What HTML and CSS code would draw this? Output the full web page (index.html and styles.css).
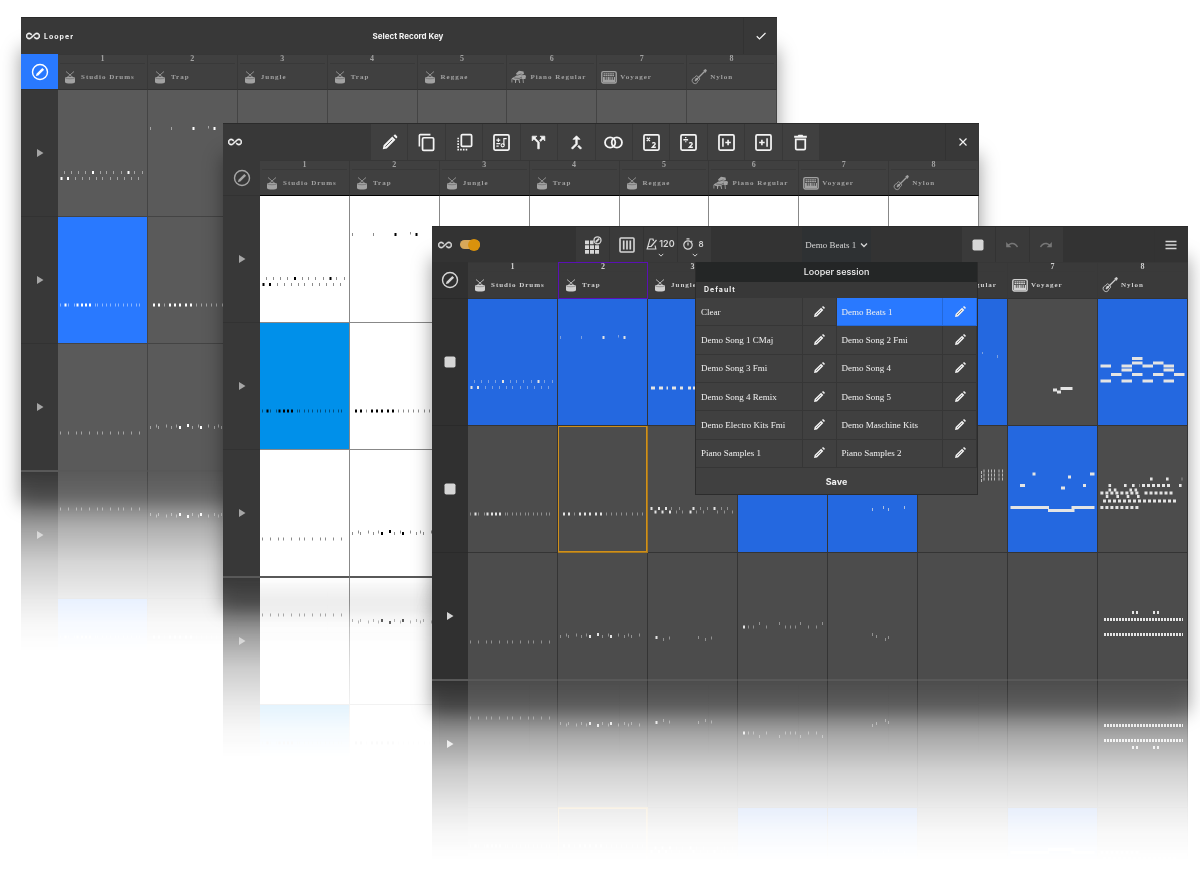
FILE: index.html
```html
<!DOCTYPE html>
<html lang="en">
<head>
<meta charset="utf-8">
<meta name="viewport" content="width=device-width, initial-scale=1">
<title>Looper</title>
<link rel="stylesheet" href="styles.css">
</head>
<body>
<svg class="defs" aria-hidden="true">
  <symbol id="loop" viewBox="0 0 24 24"><path fill="currentColor" stroke="currentColor" stroke-width=".8" d="M18.6 6.62c-1.44 0-2.8.56-3.77 1.53L12 10.66 10.48 12h.01L7.8 14.39c-.64.64-1.49.99-2.4.99-1.87 0-3.39-1.51-3.39-3.38S3.53 8.62 5.4 8.62c.91 0 1.76.35 2.44 1.03l1.13 1 1.51-1.34L9.22 8.2C8.2 7.18 6.84 6.62 5.4 6.62 2.42 6.62 0 9.04 0 12s2.42 5.38 5.4 5.38c1.44 0 2.8-.56 3.77-1.53l2.83-2.5.01.01L13.52 12h-.01l2.69-2.39c.64-.64 1.49-.99 2.4-.99 1.87 0 3.39 1.51 3.39 3.38s-1.52 3.38-3.39 3.38c-.9 0-1.76-.35-2.44-1.03l-1.14-1.01-1.51 1.34 1.27 1.12c1.02 1.01 2.37 1.57 3.82 1.57 2.98 0 5.4-2.41 5.4-5.38s-2.42-5.37-5.4-5.37z"/></symbol>
  <symbol id="key" viewBox="0 0 18 18"><circle cx="9" cy="9" r="7.5" fill="none" stroke="currentColor" stroke-width="1.4"/><path fill="currentColor" d="M4.9 13.1l.6-2.4 5.8-5.8 1.8 1.8-5.8 5.8z"/></symbol>
  <symbol id="play" viewBox="0 0 8 8"><path fill="currentColor" d="M1 0l6.5 4L1 8z"/></symbol>
  <symbol id="stop" viewBox="0 0 12 12"><rect x=".5" y=".5" width="11" height="11" rx="1.8" fill="currentColor"/></symbol>
  <symbol id="drum" viewBox="0 0 16 16"><path d="M4 2.500l7 6M12 2.500l-7 6" stroke="currentColor" stroke-width=".8" fill="none"/><path fill="currentColor" d="M3 8.400c1.500-.9 8.500-.9 10 0v4.600c0 2-10 2-10 0z"/><path d="M3.300 9c2 1 7.400 1 9.400 0" fill="none" stroke="#404040" stroke-width=".4"/></symbol>
  <symbol id="piano" viewBox="0 0 16 16"><path fill="currentColor" d="M5 4.500l3-2.800 4.500.8.5 2.500-3.500 1.200 4.500-.2 1 1-.6 3h-3l-1-.6-2 1.100.8 3.500h-.9l-1-3.200-2 .2-.4 3h-.8l-.2-3-1.700-.2L.5 9.500 6 6.200z"/><path d="M6 6.400l4.500-1.500M3.200 9l5 .4 2.800-1.400" stroke="#404040" stroke-width=".6" fill="none"/><path d="M12 9.500l.4 4.500M.9 10v3.500" stroke="currentColor" stroke-width=".8"/></symbol>
  <symbol id="synth" viewBox="0 0 16 16"><rect x=".8" y="2.600" width="14.400" height="11.400" rx="1.500" fill="none" stroke="currentColor" stroke-width="1.400"/><path d="M2.500 4.800h11M2.500 6.600h11" stroke="currentColor" stroke-width="1.200" stroke-dasharray="1.800 .4"/><path fill="currentColor" d="M2 8h12v5.200H2z"/><path d="M4.300 8v2.800M6.200 8v2.800M9 8v2.800M10.800 8v2.800M12.500 8v2.800" stroke="#3a3a3a" stroke-width=".8"/></symbol>
  <symbol id="guitar" viewBox="0 0 16 16"><path d="M6.500 7.200c-1-.8-2-.3-2.200.8-.3 1.100-3 .8-3.200 3.200-.1 2 1.600 3.700 3.500 3.400 2-.2 1.600-2.300 2.800-3 1.100-.5 1.600-1.700.9-2.600z" fill="none" stroke="currentColor" stroke-width=".9"/><path d="M4 12l9.800-9.800M12.700 1.800l1.800-.9.600.6-.9 1.900" stroke="currentColor" stroke-width="1.300" fill="none"/><circle cx="5.600" cy="10.300" r="1.200" fill="currentColor"/></symbol>
  <symbol id="edit" viewBox="0 0 24 24"><path d="M3.500 20.500l1-5L15.500 4.500l4 4L8.500 19.500zM17 3.500l1-1c.6-.6 1.400-.6 2 0L21.500 4c.6.600.600 1.400 0 2l-1 1z" fill="currentColor"/><path d="M6.800 17.200L15.500 8.500" stroke="#404040" stroke-width="1"/></symbol>
  <symbol id="copy" viewBox="0 0 24 24"><path d="M3 17V3.200C3 2.500 3.500 2 4.200 2H17" fill="none" stroke="currentColor" stroke-width="2"/><rect x="7" y="6" width="14" height="16" rx="1.500" fill="none" stroke="currentColor" stroke-width="2.200"/></symbol>
  <symbol id="paste" viewBox="0 0 24 24"><rect x="8" y="2" width="13" height="15" rx="1.500" fill="none" stroke="currentColor" stroke-width="2.200"/><path d="M4 6v15h13" fill="none" stroke="currentColor" stroke-width="2" stroke-dasharray="2 1.500"/></symbol>
  <symbol id="box" viewBox="0 0 24 24"><rect x="2.500" y="2.500" width="19" height="19" rx="1.500" fill="none" stroke="currentColor" stroke-width="2.200"/></symbol>
  <symbol id="quant" viewBox="0 0 24 24"><use href="#box"/><path d="M5.500 9h5M8 6.500v5M5.500 13.500h5M5.500 16.500h3M15 15V7h3.500" fill="none" stroke="currentColor" stroke-width="1.500"/><circle cx="13.500" cy="15.500" r="2" fill="none" stroke="currentColor" stroke-width="1.400"/></symbol>
  <symbol id="split" viewBox="0 0 24 24"><path fill="currentColor" d="M14 4l2.290 2.290-2.880 2.880 1.420 1.420 2.880-2.880L20 10V4zm-4 0H4v6l2.290-2.290 4.710 4.700V20h2v-8.410l-5.290-5.300z" stroke="currentColor" stroke-width=".9"/></symbol>
  <symbol id="merge" viewBox="0 0 24 24"><path fill="currentColor" d="M17 20.410L18.410 19 15 15.590 13.590 17zM7.500 8H11v5.590L5.590 19 7 20.410l6-6V8h3.500L12 3.500z" stroke="currentColor" stroke-width=".9"/></symbol>
  <symbol id="rings" viewBox="0 0 24 24"><g fill="none" stroke="currentColor" stroke-width="2.300"><circle cx="7.800" cy="12" r="6.500"/><circle cx="16.200" cy="12" r="6.500"/></g></symbol>
  <symbol id="double" viewBox="0 0 24 24"><use href="#box"/><path d="M6 6l4 4M10 6l-4 4M13 13c1-1.500 4-1 3.600 1L13 18h4.500" fill="none" stroke="currentColor" stroke-width="1.700"/></symbol>
  <symbol id="halve" viewBox="0 0 24 24"><use href="#box"/><path d="M5.500 8.500h6M8.500 5.200v1.500M8.500 10.300v1.500M13 13c1-1.500 4-1 3.600 1L13 18h4.500" fill="none" stroke="currentColor" stroke-width="1.700"/></symbol>
  <symbol id="before" viewBox="0 0 24 24"><use href="#box"/><path d="M7.500 6.500v11M10.500 12h7M14 8.500v7" fill="none" stroke="currentColor" stroke-width="2"/></symbol>
  <symbol id="after" viewBox="0 0 24 24"><use href="#box"/><path d="M16.500 6.500v11M6.500 12h7M10 8.500v7" fill="none" stroke="currentColor" stroke-width="2"/></symbol>
  <symbol id="trash" viewBox="0 0 24 24"><path d="M6 8v11.500c0 .9.600 1.500 1.500 1.500h9c.9 0 1.500-.6 1.500-1.500V8z" fill="none" stroke="currentColor" stroke-width="2.200"/><path fill="currentColor" d="M4 3.500h4.500l1-1.200h5l1 1.200H20V6H4z"/></symbol>
  <symbol id="close" viewBox="0 0 24 24"><path d="M5 5l14 14M19 5L5 19" stroke="currentColor" stroke-width="2.400"/></symbol>
  <symbol id="check" viewBox="0 0 24 24"><path d="M3.500 12.500l5.500 5.500L21 6" fill="none" stroke="currentColor" stroke-width="2.300"/></symbol>
  <symbol id="grid" viewBox="0 0 18 18"><path fill="currentColor" d="M1 4.500h4v3.700H1zM6 4.500h3.500v3.700H6zM1 9.300h4v3.700H1zM6 9.300h4v3.700H6zM11 9.300h4v3.700h-4zM1 14h4v3.700H1zM6 14h4v3.700H6zM11 14h4v3.700h-4z"/><circle cx="13.500" cy="4.300" r="3.500" fill="none" stroke="currentColor" stroke-width="1.300"/><path d="M11.800 6l3.300-3.300" stroke="currentColor" stroke-width="1.800"/></symbol>
  <symbol id="mixer" viewBox="0 0 16 16"><rect x="1" y="1" width="14" height="14" rx="1" fill="none" stroke="currentColor" stroke-width="1.600"/><path d="M4.700 3.500v9M8 3.500v9M11.300 3.500v9" stroke="currentColor" stroke-width="1.700"/></symbol>
  <symbol id="metro" viewBox="0 0 12 12"><path d="M7.500 3L7 1H4L1.200 11h8.600l-.7-3.500M2.200 8.500h3.300M5 8.500l5.500-6.500" fill="none" stroke="currentColor" stroke-width="1.200"/></symbol>
  <symbol id="timer" viewBox="0 0 12 12"><circle cx="6" cy="7" r="4.200" fill="none" stroke="currentColor" stroke-width="1.200"/><path d="M4.500.8h3M6 4.500v3M9.300 2.800l.9.900" stroke="currentColor" stroke-width="1.200"/></symbol>
  <symbol id="chev" viewBox="0 0 8 8"><path d="M1 2.500l3 3 3-3" fill="none" stroke="currentColor" stroke-width="1.300"/></symbol>
  <symbol id="undo" viewBox="0 0 24 24"><path fill="currentColor" d="M12.500 8c-2.650 0-5.050.99-6.900 2.600L2 7v9h9l-3.620-3.620c1.390-1.160 3.160-1.880 5.120-1.880 3.540 0 6.550 2.310 7.600 5.500l2.370-.78C21.080 11.030 17.150 8 12.500 8z"/></symbol>
  <symbol id="menu" viewBox="0 0 12 12"><path d="M.5 2.500h11M.5 6h11M.5 9.500h11" stroke="currentColor" stroke-width="1.400"/></symbol>

  <symbol id="a1" viewBox="0 0 90 127"><path class="dim" d="M6.500 81v3M13.500 81v3M20.500 81v3M27.500 81v3M42.500 81v3M48.500 81v3M55.500 81v3M63.500 81v3M76.500 81v3M84.500 81v3M17.500 87v3M24.500 87v3M31.500 87v3M38.500 87v3M44.500 87v3M52.500 87v3M59.500 87v3M66.500 87v3M73.500 87v3M80.500 87v3"/><path class="lit" d="M35 81v3M70.500 81v3M3.500 87v3M10 87v3"/></symbol>
  <symbol id="a2" viewBox="0 0 90 127"><path class="dim" d="M2.500 37v3M23.500 37v3M60.500 36v2.500"/><path class="lit" d="M45.500 37v3M66.500 37v3"/></symbol>
  <symbol id="b1" viewBox="0 0 90 127"><path class="dim" d="M2.500 86.500v3M10.500 86.500v3M16.500 86.500v3M37.500 86.500v3M39.500 86.500v3M44.500 86.500v3M48.500 86.500v3M52.500 86.500v3M57.500 86.500v3M60.500 86.500v3M65.500 86.500v3M69.500 86.500v3M73.500 86.500v3M78.500 86.500v3M81.500 86.500v3"/><path class="lit" d="M7.500 86.500v3M19.500 86.500v3M24 86.500v3M28 86.500v3M32 86.500v3"/></symbol>
  <symbol id="b2" viewBox="0 0 90 127"><path class="dim" d="M16.500 86.500v3M48.500 86.500v3M53.500 86.500v3M58.500 86.500v3M63.500 86.500v3M68.500 86.500v3M74.500 86.500v3M79.500 86.500v3M84.500 86.500v3"/><path class="lit" d="M6 86.500v3M11 86.500v3M22 86.500v3M27 86.500v3M32 86.500v3M38 86.500v3M43 86.500v3"/></symbol>
  <symbol id="c1" viewBox="0 0 90 127"><path class="dim" d="M2.500 87.500v3M10.500 87.500v3M18.500 87.500v3M23.500 87.500v3M31.500 87.500v3M39.500 87.500v3M44.500 87.500v3M52.500 87.500v3M60.500 87.500v3M65.500 87.500v3M73.500 87.500v3M81.500 87.500v3"/></symbol>
  <symbol id="c2" viewBox="0 0 90 127"><path class="dim" d="M2.500 82v3M10.500 82v3M23.500 82v3M44.500 82v3M66.500 82v3M73.500 82v3M8.500 80.500v3M18.500 80.500v3M28.500 80.500v3M50.500 80.500v3M60.500 80.500v3M70.500 80.500v3M81.500 80.500v3"/><path class="lit" d="M32 82v3M53 82v3M40 80v3"/></symbol>
  <symbol id="a3" viewBox="0 0 90 127"><path class="bar" d="M3 89h4M11 89h4M18.500 89h1.500M24 89h4M32 89h3M40 89h3M45 89h2"/></symbol>
  <symbol id="a6" viewBox="0 0 90 127"><path class="dim" d="M64.500 53v2M79.500 56v3"/></symbol>
  <symbol id="a7" viewBox="0 0 90 127"><path class="bar" d="M45 91h4M49 93h4M52.500 89.500h12"/></symbol>
  <symbol id="a8" viewBox="0 0 90 127"><path class="bar" d="M34 59.500h10.500M34 64h10.500M55 64h10.500M2.500 67h10.500M23.500 67h10.500M44.500 67h10.500M65.500 67h10.500M23.500 71h10.500M65.500 71h10.500M13 75.500h10.500M34 75.500h10.500M55 75.500h10.500M76 75.500h10.500M2.500 82h10.500M23.500 82h10.500M44.500 82h10.500M65.500 82h10.500"/></symbol>
  <symbol id="b3" viewBox="0 0 90 127"><path class="dim" d="M23.500 81v3M31.500 81v3M52.500 81v3M59.500 81v3M73.500 81v3M79.500 81v3M28.500 84.500v3M34.500 84.500v3M48.500 84.500v3M55.500 84.500v3M69.500 84.500v3M76.500 84.500v3M84.500 84.500v3"/><path class="lit" d="M3.500 81v3M11 81v3M18 81v3M45.500 81v3M66.500 81v3M7.500 84.500v3M14.500 84.500v3M22 84.500v3M42.500 84.500v3"/></symbol>
  <symbol id="b5" viewBox="0 0 90 127"><path class="mid" d="M44.500 82v3M60.500 82v3M55.500 80v3M76.500 80v3"/></symbol>
  <symbol id="b6" viewBox="0 0 90 127"><path class="mid" d="M66 43.500v3M70.500 43.500v3M73.500 43.500v3M76.500 43.500v3M81 43.500v3M84.500 43.500v3M66 47.500v3M70.500 47.500v3M73.500 47.500v3M76.500 47.500v3M81 47.500v3M84.500 47.500v3M66 51.500v3M70.500 51.500v3M73.500 51.500v3M76.500 51.500v3M81 51.500v3M84.500 51.500v3M63.500 45v3M63.500 49v3M63.500 53v3"/></symbol>
  <symbol id="b7" viewBox="0 0 90 127"><path class="bar" d="M24.500 48h3M12 59.500h5M53 62h4M60 51h3M75 59.500h3M82 48h4.500M2.500 81.500h38.500M40 84.500h26.500M63.500 81.500h23"/></symbol>
  <symbol id="b8" viewBox="0 0 90 127"><path class="bar" d="M52 53h2.600M68 53h2.600M10.500 59.500h2.600M26 59.500h2.600M34 59.500h2.600M81 59.500h2.600M10.500 64h2.600M15.800 64h2.600M31.400 64h2.600M36.500 64h2.600M7.800 70.500h2.600M18.400 70.500h2.600M28.700 70.500h2.600M39 70.500h2.600"/><path class="bar dash" d="M44 59.500h29M2.400 67h40M46.500 67h28M5 75h75M2.400 81.500h40"/><path class="dim" d="M84 51.500v3M41.500 58v3"/></symbol>
  <symbol id="c3" viewBox="0 0 90 127"><path class="dim" d="M15.500 85v3M21.500 83.500v3M50.500 83v3M57.500 85v3M63.500 83.500v3"/><path class="lit" d="M8.500 83v3"/></symbol>
  <symbol id="c4" viewBox="0 0 90 127"><path class="dim" d="M10.500 72.500v3M15.500 72.500v3M28.500 72.500v3M47.500 72.500v3M52.500 72.500v3M57.500 72.500v3M70.500 72.500v3M78.500 72.500v3M21.500 69v3M41.500 69v3M62.500 69v3M84.500 69v3"/><path class="lit" d="M6 72.500v3"/></symbol>
  <symbol id="c5" viewBox="0 0 90 127"><path class="dim" d="M44.500 80v3M48.500 82v3M57.500 85v3M60.500 83v3"/></symbol>
  <symbol id="c8" viewBox="0 0 90 127"><path class="bar" d="M34 59.500h2M38 59.500h2M55 59.500h2M59 59.500h2"/><path class="bar fine" d="M6 66.500h79M6 81.500h79"/></symbol>
</svg>

<main class="stage">
  <section class="window window-record" aria-label="Select record key">
    <div class="surface">
      <header class="toolbar">
        <div class="brand"><svg class="i14"><use href="#loop"/></svg><span class="wide">Looper</span></div>
        <h1 class="title">Select Record Key</h1>
        <button class="tool end" aria-label="Confirm"><svg class="i12"><use href="#check"/></svg></button>
      </header>
      <div class="board">
        <button class="corner picked" aria-label="Record key"><svg class="i18"><use href="#key"/></svg></button>
        <div class="track"><b>1</b><p><svg><use href="#drum"/></svg>Studio Drums</p></div>
        <div class="track"><b>2</b><p><svg><use href="#drum"/></svg>Trap</p></div>
        <div class="track"><b>3</b><p><svg><use href="#drum"/></svg>Jungle</p></div>
        <div class="track"><b>4</b><p><svg><use href="#drum"/></svg>Trap</p></div>
        <div class="track"><b>5</b><p><svg><use href="#drum"/></svg>Reggae</p></div>
        <div class="track"><b>6</b><p><svg><use href="#piano"/></svg>Piano Regular</p></div>
        <div class="track"><b>7</b><p><svg><use href="#synth"/></svg>Voyager</p></div>
        <div class="track"><b>8</b><p><svg><use href="#guitar"/></svg>Nylon</p></div>
        <button class="scene" aria-label="Play scene 1"><svg class="i8"><use href="#play"/></svg></button>
        <button class="clip"><svg><use href="#a1"/></svg></button><button class="clip"><svg><use href="#a2"/></svg></button><button class="clip"></button><button class="clip"></button><button class="clip"></button><button class="clip"></button><button class="clip"></button><button class="clip"></button>
        <button class="scene" aria-label="Play scene 2"><svg class="i8"><use href="#play"/></svg></button>
        <button class="clip on"><svg><use href="#b1"/></svg></button><button class="clip"><svg><use href="#b2"/></svg></button><button class="clip"></button><button class="clip"></button><button class="clip"></button><button class="clip"></button><button class="clip"></button><button class="clip"></button>
        <button class="scene" aria-label="Play scene 3"><svg class="i8"><use href="#play"/></svg></button>
        <button class="clip"><svg><use href="#c1"/></svg></button><button class="clip"><svg><use href="#c2"/></svg></button><button class="clip"></button><button class="clip"></button><button class="clip"></button><button class="clip"></button><button class="clip"></button><button class="clip"></button>
      </div>
    </div>
  </section>

  <section class="window window-edit" aria-label="Edit clips">
    <div class="surface">
      <header class="toolbar">
        <div class="brand"><svg class="i14"><use href="#loop"/></svg></div>
        <div class="tools tools-edit">
          <button class="tool" aria-label="Edit"><svg><use href="#edit"/></svg></button>
          <button class="tool" aria-label="Copy"><svg><use href="#copy"/></svg></button>
          <button class="tool" aria-label="Paste"><svg><use href="#paste"/></svg></button>
          <button class="tool" aria-label="Quantize"><svg><use href="#quant"/></svg></button>
          <button class="tool" aria-label="Split"><svg><use href="#split"/></svg></button>
          <button class="tool" aria-label="Merge"><svg><use href="#merge"/></svg></button>
          <button class="tool" aria-label="Overlap"><svg><use href="#rings"/></svg></button>
          <button class="tool" aria-label="Double"><svg><use href="#double"/></svg></button>
          <button class="tool" aria-label="Halve"><svg><use href="#halve"/></svg></button>
          <button class="tool" aria-label="Insert after"><svg><use href="#before"/></svg></button>
          <button class="tool" aria-label="Insert before"><svg><use href="#after"/></svg></button>
          <button class="tool" aria-label="Delete"><svg><use href="#trash"/></svg></button>
        </div>
        <button class="tool end" aria-label="Close"><svg class="i12"><use href="#close"/></svg></button>
      </header>
      <div class="board">
        <button class="corner" aria-label="Record key"><svg class="i18"><use href="#key"/></svg></button>
        <div class="track"><b>1</b><p><svg><use href="#drum"/></svg>Studio Drums</p></div>
        <div class="track"><b>2</b><p><svg><use href="#drum"/></svg>Trap</p></div>
        <div class="track"><b>3</b><p><svg><use href="#drum"/></svg>Jungle</p></div>
        <div class="track"><b>4</b><p><svg><use href="#drum"/></svg>Trap</p></div>
        <div class="track"><b>5</b><p><svg><use href="#drum"/></svg>Reggae</p></div>
        <div class="track"><b>6</b><p><svg><use href="#piano"/></svg>Piano Regular</p></div>
        <div class="track"><b>7</b><p><svg><use href="#synth"/></svg>Voyager</p></div>
        <div class="track"><b>8</b><p><svg><use href="#guitar"/></svg>Nylon</p></div>
        <button class="scene" aria-label="Play scene 1"><svg class="i8"><use href="#play"/></svg></button>
        <button class="clip"><svg><use href="#a1"/></svg></button><button class="clip"><svg><use href="#a2"/></svg></button><button class="clip"></button><button class="clip"></button><button class="clip"></button><button class="clip"></button><button class="clip"></button><button class="clip"></button>
        <button class="scene" aria-label="Play scene 2"><svg class="i8"><use href="#play"/></svg></button>
        <button class="clip on"><svg><use href="#b1"/></svg></button><button class="clip"><svg><use href="#b2"/></svg></button><button class="clip"></button><button class="clip"></button><button class="clip"></button><button class="clip"></button><button class="clip"></button><button class="clip"></button>
        <button class="scene" aria-label="Play scene 3"><svg class="i8"><use href="#play"/></svg></button>
        <button class="clip"><svg><use href="#c1"/></svg></button><button class="clip"><svg><use href="#c2"/></svg></button><button class="clip"></button><button class="clip"></button><button class="clip"></button><button class="clip"></button><button class="clip"></button><button class="clip"></button>
      </div>
    </div>
  </section>

  <section class="window window-live" aria-label="Looper">
    <div class="surface">
      <header class="toolbar">
        <div class="brand"><svg class="i14"><use href="#loop"/></svg><input class="switch" type="checkbox" checked aria-label="Looper on"></div>
        <div class="tools">
          <button class="tool" aria-label="Record grid"><svg class="i18"><use href="#grid"/></svg></button>
          <button class="tool" aria-label="Mixer"><svg class="i16"><use href="#mixer"/></svg></button>
          <button class="tool meter" aria-label="Tempo 120"><span><svg class="i12"><use href="#metro"/></svg>120</span><svg class="i8"><use href="#chev"/></svg></button>
          <button class="tool meter" aria-label="Length 8"><span><svg class="i12"><use href="#timer"/></svg><small>8</small></span><svg class="i8"><use href="#chev"/></svg></button>
        </div>
        <button class="session" aria-expanded="true" aria-controls="sessions">Demo Beats 1<svg class="i8"><use href="#chev"/></svg></button>
        <div class="tools">
          <button class="tool" aria-label="Stop"><svg class="i12"><use href="#stop"/></svg></button>
          <button class="tool faint" aria-label="Undo"><svg class="i14"><use href="#undo"/></svg></button>
          <button class="tool faint" aria-label="Redo"><svg class="i14 flip"><use href="#undo"/></svg></button>
        </div>
        <button class="tool end" aria-label="Menu"><svg class="i12"><use href="#menu"/></svg></button>
      </header>
      <div class="board">
        <button class="corner" aria-label="Record key"><svg class="i18"><use href="#key"/></svg></button>
        <div class="track"><b>1</b><p><svg><use href="#drum"/></svg>Studio Drums</p></div>
        <div class="track current"><b>2</b><p><svg><use href="#drum"/></svg>Trap</p></div>
        <div class="track"><b>3</b><p><svg><use href="#drum"/></svg>Jungle</p></div>
        <div class="track"><b>4</b><p><svg><use href="#drum"/></svg>Trap</p></div>
        <div class="track"><b>5</b><p><svg><use href="#drum"/></svg>Reggae</p></div>
        <div class="track"><b>6</b><p><svg><use href="#piano"/></svg>Piano Regular</p></div>
        <div class="track"><b>7</b><p><svg><use href="#synth"/></svg>Voyager</p></div>
        <div class="track"><b>8</b><p><svg><use href="#guitar"/></svg>Nylon</p></div>
        <button class="scene" aria-label="Stop scene 1"><svg class="i12"><use href="#stop"/></svg></button>
        <button class="clip on"><svg><use href="#a1"/></svg></button><button class="clip on"><svg><use href="#a2"/></svg></button><button class="clip on"><svg><use href="#a3"/></svg></button><button class="clip on"></button><button class="clip on"></button><button class="clip on"><svg><use href="#a6"/></svg></button><button class="clip"><svg><use href="#a7"/></svg></button><button class="clip on"><svg><use href="#a8"/></svg></button>
        <button class="scene" aria-label="Stop scene 2"><svg class="i12"><use href="#stop"/></svg></button>
        <button class="clip"><svg><use href="#b1"/></svg></button><button class="clip focus"><svg><use href="#b2"/></svg></button><button class="clip"><svg><use href="#b3"/></svg></button><button class="clip on"></button><button class="clip on"><svg><use href="#b5"/></svg></button><button class="clip"><svg><use href="#b6"/></svg></button><button class="clip on"><svg><use href="#b7"/></svg></button><button class="clip"><svg><use href="#b8"/></svg></button>
        <button class="scene" aria-label="Play scene 3"><svg class="i8"><use href="#play"/></svg></button>
        <button class="clip"><svg><use href="#c1"/></svg></button><button class="clip"><svg><use href="#c2"/></svg></button><button class="clip"><svg><use href="#c3"/></svg></button><button class="clip"><svg><use href="#c4"/></svg></button><button class="clip"><svg><use href="#c5"/></svg></button><button class="clip"></button><button class="clip"></button><button class="clip"><svg><use href="#c8"/></svg></button>
      </div>
      <div class="popover" id="sessions">
        <h2>Looper session</h2>
        <h3 class="wide">Default</h3>
        <div class="list">
          <button class="name">Clear</button><button class="pen" aria-label="Rename"><svg><use href="#edit"/></svg></button>
          <button class="name chosen">Demo Beats 1</button><button class="pen chosen" aria-label="Rename"><svg><use href="#edit"/></svg></button>
          <button class="name">Demo Song 1 CMaj</button><button class="pen" aria-label="Rename"><svg><use href="#edit"/></svg></button>
          <button class="name">Demo Song 2 Fmi</button><button class="pen" aria-label="Rename"><svg><use href="#edit"/></svg></button>
          <button class="name">Demo Song 3 Fmi</button><button class="pen" aria-label="Rename"><svg><use href="#edit"/></svg></button>
          <button class="name">Demo Song 4</button><button class="pen" aria-label="Rename"><svg><use href="#edit"/></svg></button>
          <button class="name">Demo Song 4 Remix</button><button class="pen" aria-label="Rename"><svg><use href="#edit"/></svg></button>
          <button class="name">Demo Song 5</button><button class="pen" aria-label="Rename"><svg><use href="#edit"/></svg></button>
          <button class="name">Demo Electro Kits Fmi</button><button class="pen" aria-label="Rename"><svg><use href="#edit"/></svg></button>
          <button class="name">Demo Maschine Kits</button><button class="pen" aria-label="Rename"><svg><use href="#edit"/></svg></button>
          <button class="name">Piano Samples 1</button><button class="pen" aria-label="Rename"><svg><use href="#edit"/></svg></button>
          <button class="name">Piano Samples 2</button><button class="pen" aria-label="Rename"><svg><use href="#edit"/></svg></button>
        </div>
        <button class="save">Save</button>
      </div>
    </div>
  </section>
</main>
</body>
</html>
```
FILE: styles.css
```css
* { box-sizing: border-box; }

body {
  margin: 0;
  background: #fff;
  font-family: "Inter", "Liberation Sans", sans-serif;
}

button {
  appearance: none;
  margin: 0;
  padding: 0;
  border: 0;
  border-radius: 0;
  background: none;
  color: inherit;
  font: inherit;
}

h1, h2, h3, p { margin: 0; }

svg { display: block; flex: none; }
.defs { position: absolute; width: 0; height: 0; }

.stage {
  position: relative;
  min-height: 100vh;
  overflow: hidden;
}

/* Windows overlap freely on the stage. */
.window {
  --bar: #383838;
  --head: #404040;
  --side: #383838;
  --side-width: 37px;
  --bar-height: 37px;
  --head-height: 36px;
  --cell: #5a5a5a;
  --line: #444;
  --rule: #323232;
  --label: #a2a2a2;
  --icon: #f4f4f4;
  --note: #fff;
  --on: #2979ff;
  position: absolute;
  width: 63%;
  min-width: 756px;
  box-shadow: 0 32px 18px rgba(0, 0, 0, .4);
  color: var(--icon);
}

.window-record { left: 21px; top: 17px; }

.window-edit {
  --line: #888;
  --cell: #fff;
  --note: #000;
  --on: #0090ea;
  left: 223px;
  top: 123px;
}

.window-live {
  --bar: #333;
  --head: #3a3a3a;
  --side: #303030;
  --side-width: 36px;
  --bar-height: 36px;
  --head-height: 37px;
  --cell: #4c4c4c;
  --line: #343434;
  --rule: #2a2a2a;
  --label: #d0d0d0;
  --icon: #d6d6d6;
  --note: #e4e4e4;
  --on: #2468e0;
  left: 432px;
  top: 226px;
}

.surface {
  position: relative;
  -webkit-box-reflect: below 0 linear-gradient(to top,
    #000 0, rgba(0, 0, 0, .8) 26px, rgba(0, 0, 0, .64) 40px,
    rgba(0, 0, 0, .47) 58px, rgba(0, 0, 0, .26) 90px,
    rgba(0, 0, 0, .11) 127px, rgba(0, 0, 0, .04) 152px, transparent 180px);
}

.toolbar {
  display: flex;
  justify-content: space-between;
  height: var(--bar-height);
  background: var(--bar);
  border-top: 1px solid #2b2b2b;
}

.brand {
  display: flex;
  align-items: center;
  gap: 4px;
  width: 148px;
  padding-left: 5px;
}
.window-live .brand { width: 144px; padding-left: 6px; gap: 8px; }

.wide {
  font-size: 7px;
  font-weight: 700;
  letter-spacing: 1px;
}

.title {
  flex: 1;
  align-self: center;
  font-size: 8px;
  font-weight: 700;
  text-align: center;
}
.window-record .brand { width: 52px; padding-right: 0; }

.tools { display: flex; background: var(--head); }
.window-edit .tools { flex: 0 0 449px; margin-right: auto; }
.tools-edit .tool { flex: 1; }
.tools-edit svg { width: 19px; height: 19px; }
.window-live .brand + .tools { margin-right: auto; }

.tool {
  display: flex;
  align-items: center;
  justify-content: center;
  width: 34px;
  border-right: 1px solid var(--bar);
}
.tool.end { border-right: 0; border-left: 1px solid #323232; }
.window-live .tool.end { margin-left: auto; }
.faint { color: #777; }
.flip { transform: scaleX(-1); }

.meter { flex-direction: column; font-size: 9px; font-weight: 600; line-height: 12px; padding-top: 6px; gap: 2px; }
.meter span { display: flex; gap: 1px; }
.meter small { width: 12px; font-size: 8px; }
.meter .i8 { height: 6px; }

.session {
  display: flex;
  align-items: center;
  justify-content: center;
  gap: 4px;
  width: 69px;
  margin-right: auto;
  background: #2e3133;
  font: 9px "Liberation Serif", serif;
  white-space: nowrap;
}

.i8 { width: 8px; height: 8px; }
.i12 { width: 12px; height: 12px; }
.i14 { width: 14px; height: 14px; }
.i16 { width: 16px; height: 16px; }
.i18 { width: 18px; height: 18px; }

.switch {
  appearance: none;
  display: flex;
  align-items: center;
  justify-content: flex-end;
  width: 20px;
  height: 9px;
  margin: 0;
  border-radius: 5px;
  background: #d8a85a;
}
.switch::before {
  content: "";
  flex: none;
  width: 12px;
  height: 12px;
  border-radius: 50%;
  background: #da920c;
}

.board {
  display: grid;
  grid-template-columns: var(--side-width) repeat(8, minmax(0, 1fr));
  grid-template-rows: var(--head-height) repeat(3, 127px);
}

.corner, .scene {
  display: flex;
  align-items: center;
  justify-content: center;
  background: var(--side);
  border-bottom: 1px solid var(--rule);
  color: #a6a6a6;
}
.corner.picked { background: var(--on); color: #fff; }
.window-live .corner, .window-live .scene { color: #d6d6d6; }

.track {
  padding: 0 2px;
  background: var(--head);
  border-right: 1px solid #383838;
  border-top: 1px solid #373737;
  border-bottom: 1px solid #333;
  color: var(--label);
  font: 700 7px "Liberation Serif", serif;
  overflow: hidden;
}
.window-edit .track { border-bottom-color: #000; }
.track b {
  display: block;
  border-bottom: 1px solid #393939;
  font-size: 8px;
  line-height: 8px;
  text-align: center;
}
.track p {
  display: flex;
  align-items: center;
  gap: 3px;
  height: 26px;
  padding-left: 2px;
  letter-spacing: 1px;
  white-space: nowrap;
}
.track p svg { width: 16px; height: 16px; }
.track.current { border: 1px solid #5a10b4; }

.clip {
  background: var(--cell);
  border-right: 1px solid var(--line);
  border-bottom: 1px solid var(--line);
  overflow: hidden;
}
.clip svg { width: 90px; height: 127px; stroke: var(--note); }
.clip.on { background: var(--on); }
.clip.focus { box-shadow: inset 0 0 0 1px #d0901a; border-color: #a8781c; }
.board > :nth-last-child(-n + 9) { border-bottom-color: #585858; }

.dim { stroke-width: 1; opacity: .45; }
.mid { stroke-width: 1; opacity: .7; }
.lit { stroke-width: 2; }
.bar { stroke-width: 3; }
.dash { stroke-dasharray: 3 2; }
.fine { stroke-dasharray: 2 1; }

.popover {
  position: absolute;
  left: 263px;
  top: 36px;
  width: 283px;
  background: #404040;
  border: 1px solid #2c2c2c;
  border-top: 0;
  color: #f0f0f0;
}
.popover h2 {
  background: #242626;
  font-size: 9px;
  font-weight: 500;
  line-height: 20px;
  text-align: center;
}
.popover h3 {
  padding-left: 8px;
  background: #383838;
  line-height: 16px;
}
.list {
  display: grid;
  grid-template-columns: 1fr 34px 1fr 34px;
  grid-template-rows: repeat(6, 1fr);
  height: 170px;
  font: 9px "Liberation Serif", serif;
}
.name, .pen {
  border-right: 1px solid #363636;
  border-bottom: 1px solid #363636;
}
.name { padding-left: 5px; text-align: left; white-space: nowrap; }
.pen { display: flex; align-items: center; justify-content: center; }
.pen svg { width: 14px; height: 14px; }
.chosen { background: #2979ff; border-color: #2468d8; }
.save { display: block; width: 100%; height: 26px; font-size: 9px; font-weight: 700; }
```
